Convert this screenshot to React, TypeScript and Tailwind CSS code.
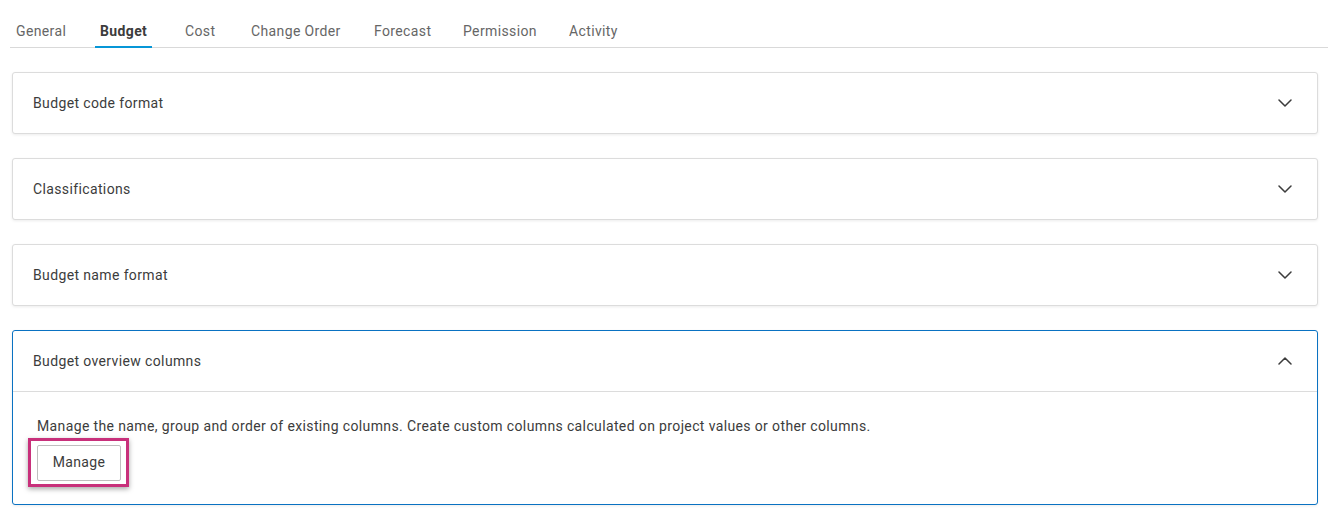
import { useState } from "react";

const tabs = [
  { label: "General", w: "w-[84px]" },
  { label: "Budget", w: "w-[85px]" },
  { label: "Cost", w: "w-[66px]" },
  { label: "Change Order", w: "w-[123px]" },
  { label: "Forecast", w: "w-[89px]" },
  { label: "Permission", w: "w-[106px]" },
  { label: "Activity", w: "w-[80px]" },
];

const sections = [
  "Budget code format",
  "Classifications",
  "Budget name format",
  "Budget overview columns",
];

function Chevron({ up }: { up?: boolean }) {
  return (
    <svg width="14" height="8" viewBox="0 0 14 8" fill="none" className="text-[#3c3c3c]">
      <path
        d={up ? "M1 7L7 1L13 7" : "M1 1L7 7L13 1"}
        stroke="currentColor"
        strokeWidth="1.5"
        strokeLinecap="round"
        strokeLinejoin="round"
      />
    </svg>
  );
}

export default function App() {
  const [active, setActive] = useState("Budget");
  const [open, setOpen] = useState<string>("Budget overview columns");

  return (
    <div className="w-[1328px] h-[516px] bg-white overflow-hidden font-['Roboto',sans-serif] text-[14px] tracking-[0.37px] text-[#3c3c3c]">
      {/* tabs */}
      <div className="ml-[10px] pt-[20px] flex pl-[1px] border-b border-[#d9d9d9]">
        {tabs.map((t) => (
          <div key={t.label} className={`${t.w} shrink-0`}>
            <button
              onClick={() => setActive(t.label)}
              className={`-mb-px px-[5px] h-[28px] flex items-start pt-[1px] border-b-2 whitespace-nowrap ${
                active === t.label
                  ? "border-[#0696d7] font-bold text-[#3c3c3c]"
                  : "border-transparent text-[#666666]"
              }`}
            >
              {t.label}
            </button>
          </div>
        ))}
      </div>

      {/* sections */}
      <div className="ml-[12px] mr-[10px] mt-[24px] flex flex-col gap-[24px]">
        {sections.map((s) => {
          const isOpen = open === s;
          return (
            <div
              key={s}
              className={`rounded-[3px] border bg-white shadow-[0_1px_3px_rgba(0,0,0,0.08)] ${
                isOpen ? "border-[#0a72c2]" : "border-[#dcdcdc]"
              }`}
            >
              <button
                onClick={() => setOpen(isOpen ? "" : s)}
                className="w-full h-[60px] flex items-center justify-between pl-[20px] pr-[25px]"
              >
                <span>{s}</span>
                <Chevron up={isOpen} />
              </button>
              {isOpen && (
                <div className="border-t border-[#dcdcdc] pl-[24px] pt-[24px] pb-[23px]">
                  <p className="leading-[20px]">
                    Manage the name, group and order of existing columns. Create custom columns calculated on project
                    values or other columns.
                  </p>
                  <div className="relative mt-[9px] w-[84px]">
                    <button className="w-[84px] h-[36px] pb-[1px] border border-[#bfbfbf] rounded-[2px] bg-white text-[#3c3c3c]">
                      Manage
                    </button>
                    <span className="pointer-events-none absolute left-[-9px] top-[-7px] w-[101px] h-[49px] border-[3px] border-[#c8307b] shadow-[0_2px_5px_rgba(0,0,0,0.35)]" />
                  </div>
                </div>
              )}
            </div>
          );
        })}
      </div>
    </div>
  );
}
